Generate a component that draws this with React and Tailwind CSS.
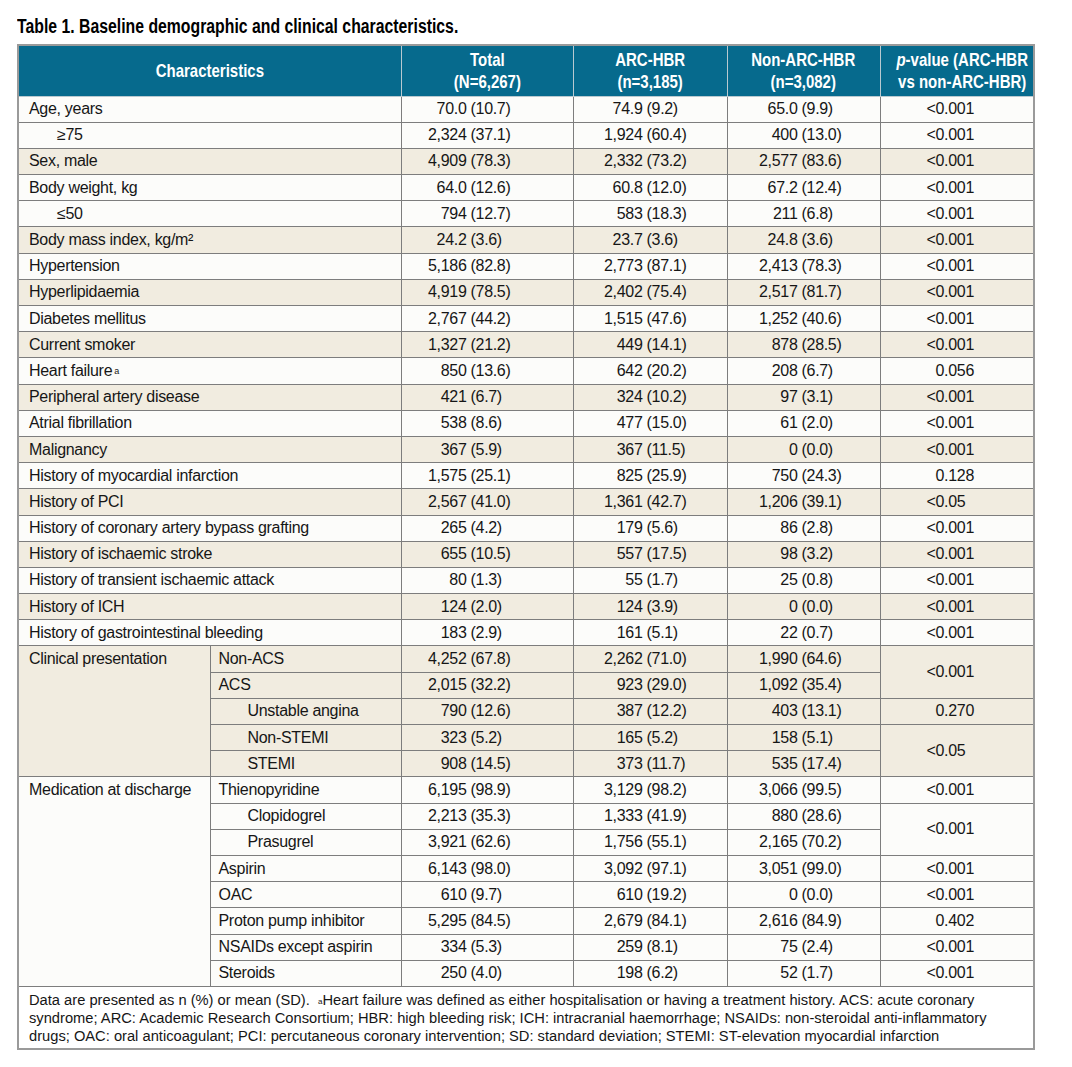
import React from 'react';

const bodyFont = "font-['Liberation_Sans','Arial',sans-serif]";
const headFont = "font-['Liberation_Sans','Arial',sans-serif]";

// [label, total, arc, non, p, shaded, indent, sup]
const topRows = [
  ['Age, years', '70.0|(10.7)', '74.9|(9.2)', '65.0|(9.9)', '<0.001', false],
  ['\u226575', '2,324|(37.1)', '1,924|(60.4)', '400|(13.0)', '<0.001', false, true],
  ['Sex, male', '4,909|(78.3)', '2,332|(73.2)', '2,577|(83.6)', '<0.001', true],
  ['Body weight, kg', '64.0|(12.6)', '60.8|(12.0)', '67.2|(12.4)', '<0.001', false],
  ['\u226450', '794|(12.7)', '583|(18.3)', '211|(6.8)', '<0.001', false, true],
  ['Body mass index, kg/m\u00b2', '24.2|(3.6)', '23.7|(3.6)', '24.8|(3.6)', '<0.001', true],
  ['Hypertension', '5,186|(82.8)', '2,773|(87.1)', '2,413|(78.3)', '<0.001', false],
  ['Hyperlipidaemia', '4,919|(78.5)', '2,402|(75.4)', '2,517|(81.7)', '<0.001', true],
  ['Diabetes mellitus', '2,767|(44.2)', '1,515|(47.6)', '1,252|(40.6)', '<0.001', false],
  ['Current smoker', '1,327|(21.2)', '449|(14.1)', '878|(28.5)', '<0.001', true],
  ['Heart failure', '850|(13.6)', '642|(20.2)', '208|(6.7)', '0.056', false, false, true],
  ['Peripheral artery disease', '421|(6.7)', '324|(10.2)', '97|(3.1)', '<0.001', true],
  ['Atrial fibrillation', '538|(8.6)', '477|(15.0)', '61|(2.0)', '<0.001', false],
  ['Malignancy', '367|(5.9)', '367|(11.5)', '0|(0.0)', '<0.001', true],
  ['History of myocardial infarction', '1,575|(25.1)', '825|(25.9)', '750|(24.3)', '0.128', false],
  ['History of PCI', '2,567|(41.0)', '1,361|(42.7)', '1,206|(39.1)', '<0.05', true],
  ['History of coronary artery bypass grafting', '265|(4.2)', '179|(5.6)', '86|(2.8)', '<0.001', false],
  ['History of ischaemic stroke', '655|(10.5)', '557|(17.5)', '98|(3.2)', '<0.001', true],
  ['History of transient ischaemic attack', '80|(1.3)', '55|(1.7)', '25|(0.8)', '<0.001', false],
  ['History of ICH', '124|(2.0)', '124|(3.9)', '0|(0.0)', '<0.001', true],
  ['History of gastrointestinal bleeding', '183|(2.9)', '161|(5.1)', '22|(0.7)', '<0.001', false],
];

// [label, total, arc, non, p (null = merged above), pSpan, indent]
const clinical = [
  ['Non-ACS', '4,252|(67.8)', '2,262|(71.0)', '1,990|(64.6)', '<0.001', 2, false],
  ['ACS', '2,015|(32.2)', '923|(29.0)', '1,092|(35.4)', null, 0, false],
  ['Unstable angina', '790|(12.6)', '387|(12.2)', '403|(13.1)', '0.270', 1, true],
  ['Non-STEMI', '323|(5.2)', '165|(5.2)', '158|(5.1)', '<0.05', 2, true],
  ['STEMI', '908|(14.5)', '373|(11.7)', '535|(17.4)', null, 0, true],
];

const medication = [
  ['Thienopyridine', '6,195|(98.9)', '3,129|(98.2)', '3,066|(99.5)', '<0.001', 1, false],
  ['Clopidogrel', '2,213|(35.3)', '1,333|(41.9)', '880|(28.6)', '<0.001', 2, true],
  ['Prasugrel', '3,921|(62.6)', '1,756|(55.1)', '2,165|(70.2)', null, 0, true],
  ['Aspirin', '6,143|(98.0)', '3,092|(97.1)', '3,051|(99.0)', '<0.001', 1, false],
  ['OAC', '610|(9.7)', '610|(19.2)', '0|(0.0)', '<0.001', 1, false],
  ['Proton pump inhibitor', '5,295|(84.5)', '2,679|(84.1)', '2,616|(84.9)', '0.402', 1, false],
  ['NSAIDs except aspirin', '334|(5.3)', '259|(8.1)', '75|(2.4)', '<0.001', 1, false],
  ['Steroids', '250|(4.0)', '198|(6.2)', '52|(1.7)', '<0.001', 1, false],
];

const td = 'border border-[#7d7d7d] p-0 align-middle';
const th = 'border border-[#b9c9d0] font-bold whitespace-nowrap';

function Num({ value, lead }) {
  const [a, b] = value.split('|');
  return (
    <div className="flex whitespace-nowrap">
      <span className="text-right" style={{ width: lead }}>{a}</span>
      <span className="pl-[4px]">{b}</span>
    </div>
  );
}

function PVal({ value }) {
  const lt = value.startsWith('<');
  return (
    <div className="flex whitespace-nowrap">
      <span className="w-[55px] text-right">{lt ? '<' : ''}</span>
      <span>{lt ? value.slice(1) : value}</span>
    </div>
  );
}

function NumCells({ r }) {
  return (
    <>
      <td className={td}><Num value={r[1]} lead={65} /></td>
      <td className={td}><Num value={r[2]} lead={69} /></td>
      <td className={td}><Num value={r[3]} lead={70} /></td>
    </>
  );
}

// narrow bold face, as in the printed table
function Narrow({ children, className = '' }) {
  return <span className={`inline-block scale-x-[0.81] ${className}`}>{children}</span>;
}

export default function App() {
  return (
    <div className={`min-h-screen bg-white text-[#161616] ${bodyFont}`}>
      <div className="pl-[17px] pt-[15px]">
        <h1 className={`${headFont} text-[19.5px] font-bold leading-[23px] text-black mb-[6px] whitespace-nowrap`}>
          <Narrow className="origin-left">Table 1. Baseline demographic and clinical characteristics.</Narrow>
        </h1>
        <table className="border-collapse border-2 border-[#9a9a9a] table-fixed w-[1016px] text-[16px] tracking-[-0.3px] leading-[18px]">
          <colgroup>
            <col className="w-[192px]" />
            <col className="w-[191px]" />
            <col className="w-[172px]" />
            <col className="w-[154px]" />
            <col className="w-[153px]" />
            <col className="w-[154px]" />
          </colgroup>
          <thead>
            <tr className={`h-[51px] bg-[#066a8d] text-white ${headFont} font-bold text-[18.5px] tracking-normal leading-[22px]`}>
              <th colSpan={2} className={th}><Narrow>Characteristics</Narrow></th>
              <th className={th}><Narrow>Total<br />(N=6,267)</Narrow></th>
              <th className={th}><Narrow>ARC-HBR<br />(n=3,185)</Narrow></th>
              <th className={th}><Narrow>Non-ARC-HBR<br />(n=3,082)</Narrow></th>
              <th className={th}><Narrow><i>p</i>-value (ARC-HBR<br />vs non-ARC-HBR)</Narrow></th>
            </tr>
          </thead>
          <tbody>
            {topRows.map((r) => (
              <tr key={r[0]} className={`h-[26.2px] ${r[5] ? 'bg-[#f1ece0]' : 'bg-[#fcfcfa]'}`}>
                <td colSpan={2} className={`${td} ${r[6] ? 'pl-[38px]' : 'pl-[10px]'}`}>
                  {r[0]}
                  {r[7] && <sup className="text-[9px] ml-[2px] relative -top-[2px]">a</sup>}
                </td>
                <NumCells r={r} />
                <td className={td}><PVal value={r[4]} /></td>
              </tr>
            ))}
            {clinical.map((r, i) => (
              <tr key={r[0]} className="h-[26.2px] bg-[#f1ece0]">
                {i === 0 && (
                  <td rowSpan={5} className={`${td} align-top pl-[10px] pt-[4px]`}>Clinical presentation</td>
                )}
                <td className={`${td} ${r[6] ? 'pl-[37px]' : 'pl-[8px]'}`}>{r[0]}</td>
                <NumCells r={r} />
                {r[4] && (
                  <td rowSpan={r[5]} className={td}><PVal value={r[4]} /></td>
                )}
              </tr>
            ))}
            {medication.map((r, i) => (
              <tr key={r[0]} className="h-[26.2px] bg-[#fcfcfa]">
                {i === 0 && (
                  <td rowSpan={8} className={`${td} align-top pl-[10px] pt-[4px]`}>Medication at discharge</td>
                )}
                <td className={`${td} ${r[6] ? 'pl-[37px]' : 'pl-[8px]'}`}>{r[0]}</td>
                <NumCells r={r} />
                {r[4] && (
                  <td rowSpan={r[5]} className={td}><PVal value={r[4]} /></td>
                )}
              </tr>
            ))}
            <tr className="bg-white">
              <td colSpan={6} className="border border-[#7d7d7d] pl-[10px] pt-[4px] pb-[2px] text-[14.7px] tracking-normal leading-[18.3px] whitespace-nowrap">
                Data are presented as n (%) or mean (SD).&nbsp;&nbsp;<sup className="text-[8px] relative -top-[1px]">a</sup>Heart failure was defined as either hospitalisation or having a treatment history. ACS: acute coronary
                <br />
                syndrome; ARC: Academic Research Consortium; HBR: high bleeding risk; ICH: intracranial haemorrhage; NSAIDs: non-steroidal anti-inflammatory
                <br />
                drugs; OAC: oral anticoagulant; PCI: percutaneous coronary intervention; SD: standard deviation; STEMI: ST-elevation myocardial infarction
              </td>
            </tr>
          </tbody>
        </table>
      </div>
    </div>
  );
}
